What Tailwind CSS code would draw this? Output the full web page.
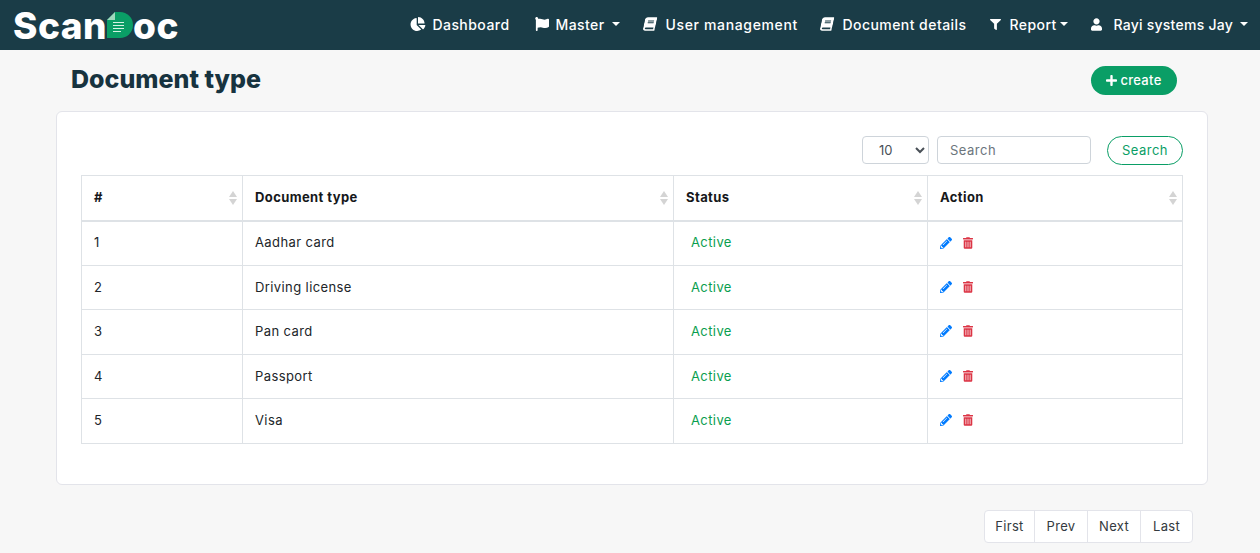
<!DOCTYPE html>
<html lang="en">
  <head>
    <meta charset="UTF-8" />
    <meta name="viewport" content="width=device-width, initial-scale=1.0" />
    <title>Document type</title>
    <script src="https://cdn.jsdelivr.net/npm/@tailwindcss/browser@4"></script>
  </head>
  <body class="bg-[#f7f7f7] h-[553px] overflow-hidden [font-family:Inter,sans-serif] text-[14px] text-[#212529]">
    <nav class="bg-[#1a3c47] h-[50px] flex items-center justify-between pl-[13px] pr-[12px] text-white">
      <a class="flex items-center text-[37px] font-extrabold tracking-[0.5px] leading-none">
        <span>Scan</span>
        <svg class="w-[26px] h-[26px]" viewBox="0 0 26 26">
          <path d="M8 0H13A13 13 0 0 1 13 26H0V8Z" fill="#0a9e66" />
          <path d="M8 0V8H0Z" fill="#9fd8bd" />
          <path d="M6 10.5H17M6 13.5H17M6 16.5H17M6 19.5H14" stroke="#d6f2e4" stroke-width="1" />
        </svg>
        <span>oc</span>
      </a>
      <div class="flex items-center font-medium tracking-[0.45px] -mt-[2px]">
        <a class="flex items-center w-[125px]">
          <svg class="w-[16px] h-[14px] mr-[6px]" viewBox="0 0 544 512" fill="currentColor"><path d="M527.79 288H290.5l158.03 158.03c6.04 6.04 15.98 6.53 22.19.68 38.7-36.46 65.32-85.61 73.13-140.86 1.34-9.46-6.51-17.85-16.06-17.85zm-15.83-64.8C503.72 103.74 408.26 8.28 288.8.04 279.68-.59 272 7.1 272 16.24V240h223.77c9.14 0 16.82-7.68 16.19-16.8zM224 288V50.71c0-9.55-8.39-17.4-17.84-16.06C86.99 51.49-4.1 155.6.14 280.37 4.5 408.51 114.83 513.59 243.03 511.98c50.4-.63 96.97-16.87 135.26-44.03 7.9-5.6 8.42-17.23 1.57-24.08L224 288z" /></svg>
          Dashboard
        </a>
        <a class="flex items-center w-[109px]">
          <svg class="w-[14px] h-[14px] mr-[6px]" viewBox="0 0 512 512" fill="currentColor"><path d="M349.565 98.783C295.978 98.783 251.721 64 184.348 64c-24.955 0-47.309 4.384-68.045 12.013a55.947 55.947 0 0 0 3.586-23.562C118.117 24.015 94.806 1.206 66.338.048 34.345-1.254 8 24.296 8 56c0 19.026 9.497 35.825 24 45.945V488c0 13.255 10.745 24 24 24h16c13.255 0 24-10.745 24-24v-94.4c28.311-12.064 63.582-22.122 114.435-22.122 53.588 0 97.844 34.783 165.217 34.783 48.169 0 86.667-16.294 122.505-40.858C506.84 359.452 512 349.571 512 339.045v-243.1c0-23.393-24.269-38.87-45.485-29.016-34.338 15.948-76.454 31.854-116.95 31.854z" /></svg>
          Master
          <span class="ml-[7px] border-x-[4px] border-x-transparent border-t-[4px] border-t-white"></span>
        </a>
        <a class="flex items-center w-[177px] tracking-[0.65px]">
          <svg class="w-[12px] h-[14px] mr-[9px] -skew-x-12" viewBox="0 0 448 512" fill="currentColor"><path d="M448 360V24c0-13.3-10.7-24-24-24H96C43 0 0 43 0 96v320c0 53 43 96 96 96h328c13.3 0 24-10.7 24-24v-16c0-7.5-3.5-14.3-8.9-18.7-4.2-15.4-4.2-59.3 0-74.7 5.4-4.3 8.9-11.1 8.9-18.6zM128 134c0-3.3 2.7-6 6-6h212c3.3 0 6 2.7 6 6v20c0 3.3-2.7 6-6 6H134c-3.3 0-6-2.7-6-6v-20zm0 64c0-3.3 2.7-6 6-6h212c3.3 0 6 2.7 6 6v20c0 3.3-2.7 6-6 6H134c-3.3 0-6-2.7-6-6v-20zm253.4 250H96c-17.7 0-32-14.3-32-32 0-17.6 14.4-32 32-32h285.4c-1.9 17.1-1.9 46.9 0 64z" /></svg>
          User management
        </a>
        <a class="flex items-center w-[169px]">
          <svg class="w-[12px] h-[14px] mr-[9px] -skew-x-12" viewBox="0 0 448 512" fill="currentColor"><path d="M448 360V24c0-13.3-10.7-24-24-24H96C43 0 0 43 0 96v320c0 53 43 96 96 96h328c13.3 0 24-10.7 24-24v-16c0-7.5-3.5-14.3-8.9-18.7-4.2-15.4-4.2-59.3 0-74.7 5.4-4.3 8.9-11.1 8.9-18.6zM128 134c0-3.3 2.7-6 6-6h212c3.3 0 6 2.7 6 6v20c0 3.3-2.7 6-6 6H134c-3.3 0-6-2.7-6-6v-20zm0 64c0-3.3 2.7-6 6-6h212c3.3 0 6 2.7 6 6v20c0 3.3-2.7 6-6 6H134c-3.3 0-6-2.7-6-6v-20zm253.4 250H96c-17.7 0-32-14.3-32-32 0-17.6 14.4-32 32-32h285.4c-1.9 17.1-1.9 46.9 0 64z" /></svg>
          Document details
        </a>
        <a class="flex items-center w-[101px]">
          <svg class="w-[11px] h-[11px] mr-[8px]" viewBox="0 0 512 512" fill="currentColor"><path d="M487.976 0H24.028C2.71 0-8.047 25.866 7.058 40.971L192 225.941V432c0 7.831 3.821 15.17 10.237 19.662l80 55.98C298.02 518.69 320 507.493 320 487.98V225.941l184.947-184.97C520.021 25.896 509.338 0 487.976 0z" /></svg>
          Report
          <span class="ml-[3px] border-x-[4px] border-x-transparent border-t-[4px] border-t-white"></span>
        </a>
        <a class="flex items-center tracking-[0.25px]">
          <svg class="w-[11px] h-[13px] mr-[11px]" viewBox="0 0 448 512" fill="currentColor"><path d="M224 256c70.7 0 128-57.3 128-128S294.7 0 224 0 96 57.3 96 128s57.3 128 128 128zm89.6 32h-16.7c-22.2 10.2-46.9 16-72.9 16s-50.6-5.8-72.9-16h-16.7C60.2 288 0 348.2 0 422.4V464c0 26.5 21.5 48 48 48h352c26.5 0 48-21.5 48-48v-41.6c0-74.2-60.2-134.4-134.4-134.4z" /></svg>
          Rayi systems Jay
          <span class="ml-[7px] border-x-[4px] border-x-transparent border-t-[4px] border-t-white"></span>
        </a>
      </div>
    </nav>

    <main class="w-[1152px] ml-[56px]">
      <div class="h-[61px] flex items-center justify-between pl-[15px] pr-[31px]">
        <h1 class="text-[25px] font-extrabold text-[#17333f] -mt-[1px]">Document type</h1>
        <button class="h-[29px] w-[86px] -mt-[1px] pt-[1px] rounded-full bg-[#0a9e66] text-white text-[13px] font-medium flex items-center justify-center gap-[3px] tracking-[0.3px]">
          <svg class="w-[11px] h-[13px]" viewBox="0 0 448 512" fill="currentColor"><path d="M416 208H272V64c0-17.67-14.33-32-32-32h-32c-17.67 0-32 14.33-32 32v144H32c-17.67 0-32 14.33-32 32v32c0 17.67 14.33 32 32 32h144v144c0 17.67 14.33 32 32 32h32c17.67 0 32-14.33 32-32V304h144c17.67 0 32-14.33 32-32v-32c0-17.67-14.33-32-32-32z" /></svg>
          create
        </button>
      </div>

      <section class="bg-white border border-[#e3e4ea] rounded-[6px] h-[374px] pt-[24px] px-[24px]">
        <div class="flex justify-end items-start h-[29px] mb-[10px]">
          <select class="w-[67px] h-[28px] border border-[#ced4da] rounded-[4px] bg-white text-[13px] pl-[12px] text-[#495057]">
            <option>10</option>
          </select>
          <input class="w-[154px] h-[28px] ml-[8px] border border-[#ced4da] rounded-[4px] px-[12px] pb-[1px] text-[13px] tracking-[0.5px] placeholder:text-[#6c757d]" placeholder="Search" />
          <button class="w-[76px] h-[29px] ml-[16px] border border-[#0a9e66] rounded-full text-[#0a9e66] text-[13px] tracking-[0.5px]">Search</button>
        </div>

        <table class="w-[1102px] table-fixed border-collapse text-[13px] tracking-[0.4px]">
          <thead>
            <tr class="h-[45px] border-b-2 border-[#dee2e6] text-left text-[#16181b]">
              <th class="w-[161px] border border-[#dee2e6] border-b-2 pl-[12px] pr-[5px] font-bold">
                <div class="flex items-center justify-between">#
                  <span class="flex flex-col gap-[2px]"><i class="border-x-[4px] border-x-transparent border-b-[6px] border-b-[#d4d4d4]"></i><i class="border-x-[4px] border-x-transparent border-t-[6px] border-t-[#d4d4d4]"></i></span>
                </div>
              </th>
              <th class="w-[431px] border border-[#dee2e6] border-b-2 pl-[12px] pr-[5px] font-bold">
                <div class="flex items-center justify-between">Document type
                  <span class="flex flex-col gap-[2px]"><i class="border-x-[4px] border-x-transparent border-b-[6px] border-b-[#d4d4d4]"></i><i class="border-x-[4px] border-x-transparent border-t-[6px] border-t-[#d4d4d4]"></i></span>
                </div>
              </th>
              <th class="w-[254px] border border-[#dee2e6] border-b-2 pl-[12px] pr-[5px] font-bold">
                <div class="flex items-center justify-between">Status
                  <span class="flex flex-col gap-[2px]"><i class="border-x-[4px] border-x-transparent border-b-[6px] border-b-[#d4d4d4]"></i><i class="border-x-[4px] border-x-transparent border-t-[6px] border-t-[#d4d4d4]"></i></span>
                </div>
              </th>
              <th class="border border-[#dee2e6] border-b-2 pl-[12px] pr-[5px] font-bold">
                <div class="flex items-center justify-between">Action
                  <span class="flex flex-col gap-[2px]"><i class="border-x-[4px] border-x-transparent border-b-[6px] border-b-[#d4d4d4]"></i><i class="border-x-[4px] border-x-transparent border-t-[6px] border-t-[#d4d4d4]"></i></span>
                </div>
              </th>
            </tr>
          </thead>
          <tbody id="rows"></tbody>
        </table>
      </section>

      <div class="flex justify-end pr-[15px] mt-[25px]">
        <div class="flex h-[33px] bg-white border border-[#e3e4ea] rounded-[4px] text-[13px] tracking-[0.3px] text-[#343a40]">
          <a class="w-[50px] flex items-center justify-center border-r border-[#e3e4ea]">First</a>
          <a class="w-[53px] flex items-center justify-center border-r border-[#e3e4ea]">Prev</a>
          <a class="w-[53px] flex items-center justify-center border-r border-[#e3e4ea]">Next</a>
          <a class="w-[51px] flex items-center justify-center">Last</a>
        </div>
      </div>
    </main>

    <script>
      const docTypes = ["Aadhar card", "Driving license", "Pan card", "Passport", "Visa"];
      const rows = document.getElementById("rows");
      docTypes.forEach((name, i) => {
        const tr = document.createElement("tr");
        tr.className = "h-[44.5px]";
        tr.innerHTML = `
          <td class="border border-[#dee2e6] pl-[12px]">${i + 1}</td>
          <td class="border border-[#dee2e6] pl-[12px]">${name}</td>
          <td class="border border-[#dee2e6] pl-[17px] text-[#0a9e4f]">Active</td>
          <td class="border border-[#dee2e6] pl-[12px]">
            <div class="flex items-center gap-[11px] -mt-[1px]">
              <svg class="w-[12px] h-[12px]" viewBox="0 0 512 512" fill="#007bff"><path d="M497.9 142.1l-46.1 46.1c-4.7 4.7-12.3 4.7-17 0l-111-111c-4.7-4.7-4.7-12.3 0-17l46.1-46.1c18.7-18.7 49.1-18.7 67.9 0l60.1 60.1c18.8 18.7 18.8 49.1 0 67.9zM284.2 99.8L21.6 362.4.4 483.9c-2.9 16.4 11.4 30.6 27.8 27.8l121.5-21.3 262.6-262.6c4.7-4.7 4.7-12.3 0-17l-111-111c-4.8-4.7-12.4-4.7-17.1 0zM124.1 339.9c-5.5-5.5-5.5-14.3 0-19.8l154-154c5.5-5.5 14.3-5.5 19.8 0s5.5 14.3 0 19.8l-154 154c-5.5 5.5-14.3 5.5-19.8 0zM88 424h48v36.3l-64.5 11.3-31.1-31.1L51.7 376H88v48z" /></svg>
              <svg class="w-[10px] h-[12px]" viewBox="0 0 448 512" fill="#dc3545"><path d="M32 464a48 48 0 0 0 48 48h288a48 48 0 0 0 48-48V128H32zm272-256a16 16 0 0 1 32 0v224a16 16 0 0 1-32 0zm-96 0a16 16 0 0 1 32 0v224a16 16 0 0 1-32 0zm-96 0a16 16 0 0 1 32 0v224a16 16 0 0 1-32 0zM432 32H312l-9.4-18.7A24 24 0 0 0 281.1 0H166.8a23.72 23.72 0 0 0-21.4 13.3L136 32H16A16 16 0 0 0 0 48v32a16 16 0 0 0 16 16h416a16 16 0 0 0 16-16V48a16 16 0 0 0-16-16z" /></svg>
            </div>
          </td>`;
        rows.appendChild(tr);
      });
    </script>
  </body>
</html>
